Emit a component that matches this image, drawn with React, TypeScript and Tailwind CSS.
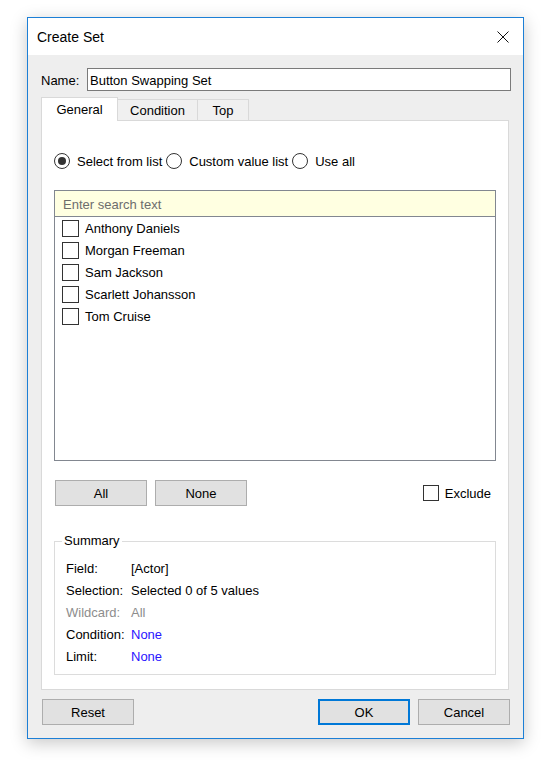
const items = ['Anthony Daniels', 'Morgan Freeman', 'Sam Jackson', 'Scarlett Johansson', 'Tom Cruise'];

const summary = [
  { label: 'Field:', value: '[Actor]', tone: 'normal' },
  { label: 'Selection:', value: 'Selected 0 of 5 values', tone: 'normal' },
  { label: 'Wildcard:', value: 'All', tone: 'muted' },
  { label: 'Condition:', value: 'None', tone: 'link' },
  { label: 'Limit:', value: 'None', tone: 'link' },
];

function Radio({ checked, label }: { checked?: boolean; label: string }) {
  return (
    <div className="flex items-center">
      <span className="w-4 h-4 rounded-full border border-[#333333] bg-white flex items-center justify-center">
        {checked && <span className="w-2 h-2 rounded-full bg-[#333333]" />}
      </span>
      <span className="ml-[7px] mr-[4px] pt-[2px]">{label}</span>
    </div>
  );
}

function Button({ label, primary, className = '' }: { label: string; primary?: boolean; className?: string }) {
  return (
    <div
      className={`w-[92px] h-[26px] flex items-center justify-center pt-[2px] bg-[#e1e1e1] ${
        primary ? 'border-2 border-[#0078d7]' : 'border border-[#adadad]'
      } ${className}`}
    >
      {label}
    </div>
  );
}

export default function App() {
  return (
    <div className="min-h-screen bg-white pl-[27px] pt-[17px] font-['Liberation_Sans',Arial,sans-serif] text-[13px] leading-[16px] text-black">
      <div className="w-[497px] border border-[#1c7fd6] bg-[#eeeeee] shadow-[0_4px_16px_rgba(0,0,0,0.22)] flex flex-col">
        {/* title bar */}
        <div className="h-[37px] bg-white flex items-center justify-between pl-[9px] pr-[14px]">
          <span className="text-[14px]">Create Set</span>
          <svg width="12" height="12" viewBox="0 0 12 12" className="block">
            <path d="M0.5 0.5 L11.5 11.5 M11.5 0.5 L0.5 11.5" stroke="#111" strokeWidth="1" fill="none" />
          </svg>
        </div>

        <div className="pl-[13px] pr-[14px] pt-[13px] pb-[13px]">
          {/* name */}
          <div className="flex items-center h-[23px]">
            <span className="w-[46px] pt-[2px]">Name:</span>
            <div className="flex-1 -mr-[2px] h-[23px] border border-[#7a7a7a] bg-white flex items-center pl-[2px] pt-[2px]">
              Button Swapping Set
            </div>
          </div>

          {/* tabs */}
          <div className="mt-[6px] flex items-end h-[23px]">
            <div className="relative z-10 w-[77px] h-[24px] -mb-px bg-white border border-b-0 border-[#d9d9d9] flex items-center justify-center pt-[1px]">
              General
            </div>
            <div className="-ml-px w-[81px] h-[21px] bg-[#f0f0f0] border border-b-0 border-[#d9d9d9] flex items-center justify-center pt-[2px]">
              Condition
            </div>
            <div className="-ml-px w-[52px] h-[21px] bg-[#f0f0f0] border border-b-0 border-[#d9d9d9] flex items-center justify-center pt-[2px]">
              Top
            </div>
          </div>

          {/* panel */}
          <div className="h-[570px] bg-white border border-[#d9d9d9] px-[12px] pt-[32px]">
            <div className="flex items-center h-4">
              <Radio checked label="Select from list" />
              <Radio label="Custom value list" />
              <Radio label="Use all" />
            </div>

            <div className="mt-[21px] h-[271px] border border-[#828790] bg-white">
              <div className="h-[26px] bg-[#ffffe1] border-b border-[#828790] flex items-center pl-[8px] pt-[2px] text-[#6d6d6d]">
                Enter search text
              </div>
              {items.map(name => (
                <div key={name} className="h-[22px] flex items-center pl-[7px]">
                  <span className="w-[17px] h-[17px] border border-[#333333] bg-white" />
                  <span className="ml-[6px] pt-[2px]">{name}</span>
                </div>
              ))}
            </div>

            <div className="mt-[19px] flex items-center">
              <Button label="All" className="ml-px" />
              <Button label="None" className="ml-[8px]" />
              <div className="ml-auto pr-[5px] flex items-center">
                <span className="w-4 h-4 border border-[#333333] bg-white" />
                <span className="ml-[6px] pt-[2px]">Exclude</span>
              </div>
            </div>

            <div className="relative mt-[35px] h-[134px] border border-[#dcdcdc] pl-[11px] pt-[15px]">
              <span className="absolute left-[7px] -top-[9px] px-[2px] bg-white">Summary</span>
              {summary.map(row => (
                <div
                  key={row.label}
                  className={`h-[22px] flex items-center pt-[2px] ${row.tone === 'muted' ? 'text-[#8d8d8d]' : ''}`}
                >
                  <span className="w-[65px]">{row.label}</span>
                  <span className={row.tone === 'link' ? 'text-[#2a14ff]' : ''}>{row.value}</span>
                </div>
              ))}
            </div>
          </div>

          {/* footer buttons */}
          <div className="mt-[9px] flex items-center">
            <Button label="Reset" className="ml-px" />
            <Button label="OK" primary className="ml-auto" />
            <Button label="Cancel" className="ml-[8px] -mr-px" />
          </div>
        </div>
      </div>
    </div>
  );
}
